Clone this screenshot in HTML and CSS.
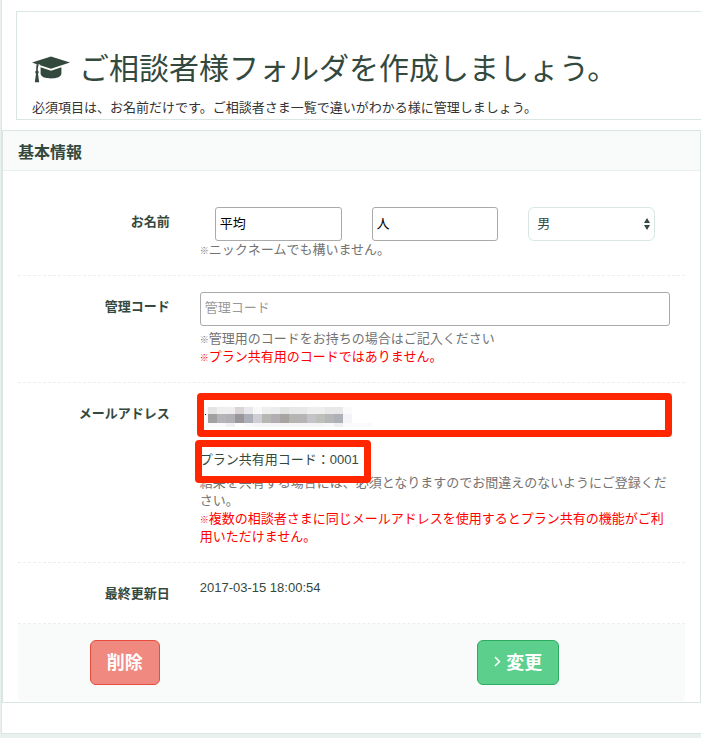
FILE: index.html
```html
<!DOCTYPE html>
<html lang="ja">
    <head>
        <meta charset="UTF-8">
        <meta name="viewport" content="width=device-width, initial-scale=1">
        <title>ご相談者様フォルダ</title>
        <link rel="stylesheet" href="styles.css">
    </head>
    <body>
        <main class="wrapper">
            <header class="page-header">
                <h1>
                    <svg class="icon-cap" viewBox="0 0 38 27" aria-hidden="true">
                        <path d="M19 0.5 L38 6.6 L19 12.8 L7.4 9 L8.6 8.2 L5.4 8.4 L0 6.6 Z"/>
                        <path d="M8.6 11.2 L19 14.8 L29.4 11.2 V18 C28.6 21.2 24.5 22.4 19 22.4 C13.5 22.4 9.4 21.2 8.6 18 Z"/>
                        <path d="M4.8 8 L6.8 8.8 C6 10.4 5.8 12.4 5.8 14.6 C7 15.4 7 17 6 17.8 L7.2 26.2 H2.8 L4 17.8 C3 17 3 15.4 4.2 14.6 C4.2 12 4.2 10 4.8 8 Z"/>
                    </svg>
                    <span>ご相談者様フォルダを作成しましょう。</span>
                </h1>
                <p>必須項目は、お名前だけです。ご相談者さま一覧で違いがわかる様に管理しましょう。</p>
            </header>

            <section class="panel">
                <h2 class="panel-heading">基本情報</h2>
                <form class="panel-body">
                    <div class="form-group">
                        <label class="form-label" for="sei">お名前</label>
                        <div class="form-field">
                            <div class="name-row">
                                <input type="text" id="sei" class="form-control" value="平均">
                                <input type="text" id="mei" class="form-control" value="人" aria-label="名">
                                <div class="select-wrap">
                                    <select id="seibetsu" class="form-control" aria-label="性別">
                                        <option selected>男</option>
                                        <option>女</option>
                                    </select>
                                    <svg class="select-arrow" viewBox="0 0 6 12" aria-hidden="true">
                                        <path d="M3 0 L6 5 H0 Z M0 7 H6 L3 12 Z"/>
                                    </svg>
                                </div>
                            </div>
                            <p class="help"><span class="kome">※</span>ニックネームでも構いません。</p>
                        </div>
                    </div>

                    <div class="form-group">
                        <label class="form-label" for="code">管理コード</label>
                        <div class="form-field">
                            <input type="text" id="code" class="form-control" placeholder="管理コード">
                            <p class="help help-gap"><span class="kome">※</span>管理用のコードをお持ちの場合はご記入ください</p>
                            <p class="help caution"><span class="kome">※</span>プラン共有用のコードではありません。</p>
                        </div>
                    </div>

                    <div class="form-group">
                        <label class="form-label" for="email">メールアドレス</label>
                        <div class="form-field">
                            <div class="mail-box">
                                <input type="email" id="email" class="form-control">
                                <svg class="mosaic" viewBox="0 0 167 20" shape-rendering="crispEdges" aria-hidden="true">
                                    <rect x="0" y="7" width="1" height="1" fill="#111"/>
                                    <rect x="1" y="0" width="2" height="20" fill="#f8f8f8"/>
                                    <!-- 上段 -->
                                    <rect x="3" y="0" width="9" height="7" fill="#e4e4e4"/>
                                    <rect x="12" y="0" width="18" height="7" fill="#eeeeee"/>
                                    <rect x="30" y="0" width="9" height="7" fill="#d9d5d7"/>
                                    <rect x="39" y="0" width="9" height="7" fill="#e8e8ed"/>
                                    <rect x="48" y="0" width="9" height="7" fill="#f8f8f8"/>
                                    <rect x="57" y="0" width="9" height="7" fill="#eeeeee"/>
                                    <rect x="66" y="0" width="9" height="7" fill="#ececec"/>
                                    <rect x="75" y="0" width="9" height="7" fill="#e3e3e1"/>
                                    <rect x="84" y="0" width="18" height="7" fill="#e8e8e8"/>
                                    <rect x="102" y="0" width="18" height="7" fill="#eeeeef"/>
                                    <rect x="120" y="0" width="18" height="7" fill="#e8e8e8"/>
                                    <rect x="138" y="0" width="9" height="7" fill="#fafafa"/>
                                    <!-- 中段 -->
                                    <rect x="3" y="7" width="9" height="9" fill="#a1a1a1"/>
                                    <rect x="12" y="7" width="9" height="9" fill="#b5b4b8"/>
                                    <rect x="21" y="7" width="9" height="9" fill="#b0b0b5"/>
                                    <rect x="30" y="7" width="9" height="9" fill="#99979c"/>
                                    <rect x="39" y="7" width="9" height="9" fill="#adafb8"/>
                                    <rect x="48" y="7" width="9" height="9" fill="#cecfd4"/>
                                    <rect x="57" y="7" width="9" height="9" fill="#b6b6b3"/>
                                    <rect x="66" y="7" width="9" height="9" fill="#b2adb2"/>
                                    <rect x="75" y="7" width="9" height="9" fill="#a5a4a1"/>
                                    <rect x="84" y="7" width="9" height="9" fill="#b5b4b1"/>
                                    <rect x="93" y="7" width="9" height="9" fill="#b6b4b4"/>
                                    <rect x="102" y="7" width="9" height="9" fill="#c3c3c9"/>
                                    <rect x="111" y="7" width="9" height="9" fill="#bdbfbb"/>
                                    <rect x="120" y="7" width="9" height="9" fill="#b5b6b7"/>
                                    <rect x="129" y="7" width="9" height="9" fill="#adb0b7"/>
                                    <rect x="138" y="7" width="9" height="9" fill="#f4f4f7"/>
                                    <!-- 下段 -->
                                    <rect x="3" y="16" width="18" height="4" fill="#fafafa"/>
                                    <rect x="21" y="16" width="9" height="4" fill="#f1f1f2"/>
                                    <rect x="39" y="16" width="9" height="4" fill="#f9f9fa"/>
                                    <rect x="48" y="16" width="72" height="4" fill="#f5f5f5"/>
                                    <rect x="120" y="16" width="9" height="4" fill="#f8f8f8"/>
                                    <rect x="129" y="16" width="9" height="4" fill="#eeeeef"/>
                                    <rect x="138" y="16" width="29" height="4" fill="#fafafb"/>
                                </svg>
                            </div>
                            <p class="plan-code">プラン共有用コード：0001</p>
                            <p class="help help-gap">結果を共有する場合には、必須となりますのでお間違えのないようにご登録ください。</p>
                            <p class="help caution"><span class="kome">※</span>複数の相談者さまに同じメールアドレスを使用するとプラン共有の機能がご利用いただけません。</p>
                        </div>
                    </div>

                    <div class="form-group">
                        <span class="form-label">最終更新日</span>
                        <div class="form-field">2017-03-15 18:00:54</div>
                    </div>

                    <div class="form-actions">
                        <div class="action-left">
                            <button type="button" class="btn btn-danger">削除</button>
                        </div>
                        <div class="action-right">
                            <button type="submit" class="btn btn-success">
                                <svg class="icon-angle" viewBox="0 0 7 11" aria-hidden="true">
                                    <path d="M1 1 L5.5 5.5 L1 10"/>
                                </svg>
                                変更
                            </button>
                        </div>
                    </div>
                </form>
            </section>
        </main>
    </body>
</html>
```
FILE: styles.css
```css
* {
    box-sizing: border-box;
}
body {
    margin: 0;
    padding: 0 0 4px 1px;
    background-color: #e9f0ed;
    color: #34493e;
    font-family: "Liberation Sans", "Noto Sans CJK JP", sans-serif;
    font-size: 13px;
    line-height: 18px;
}
.wrapper {
    padding: 11px 0 30px;
    background-color: #fff;
    border-left: 1px solid #dae6e1;
    border-bottom: 1px solid #dae6e1;
}

/* ページ見出し */
.page-header {
    margin: 0 0 10px 14px;
    padding: 40px 0 2px 15px;
    border: 1px solid #dae6e1;
    border-right: none;
}
.page-header h1 {
    display: flex;
    align-items: center;
    gap: 9px;
    margin: 0 0 13px;
    font-size: 30px;
    line-height: 34px;
    font-weight: normal;
}
.page-header p {
    margin: 0;
    color: #333;
}
.icon-cap {
    width: 38px;
    height: 27px;
    fill: #34493e;
}

/* パネル */
.panel {
    border: 1px solid #dae6e1;
}
.panel-heading {
    margin: 0;
    padding: 12px 15px 7px;
    background-color: #f9fbfa;
    border-bottom: 1px solid #e8efec;
    font-size: 16px;
    line-height: 20px;
}
.panel-body {
    padding: 20px 15px 1px;
}
.form-group {
    display: flex;
    padding: 16px 0;
    border-bottom: 1px dashed #eee;
}
.form-label {
    width: 25%;
    padding: 6px 15px 4px 0;
    font-weight: bold;
    text-align: right;
}
.form-field {
    width: 75%;
    padding: 0 15px;
}
.name-row {
    display: grid;
    grid-template-columns: 1fr 1fr 1fr;
    gap: 30px;
    padding: 0 15px;
}
.form-control {
    display: block;
    width: 100%;
    height: 34px;
    padding: 0 4px 3px;
    background-color: #fff;
    border: 1px solid #aaa;
    border-radius: 3px;
    color: #000;
    font-family: inherit;
    font-size: 13px;
}
.form-control::placeholder {
    color: #999;
}
select.form-control {
    appearance: none;
    padding: 0 8px 2px;
    border-color: #dae6e1;
    border-radius: 6px;
    color: #34493e;
}
.select-wrap {
    position: relative;
}
.select-arrow {
    position: absolute;
    top: 11px;
    right: 5px;
    width: 6px;
    height: 12px;
    fill: #34493e;
    pointer-events: none;
}
.help {
    margin: 0;
    color: #737373;
}
.help-gap {
    margin-top: 4px;
}
.kome {
    font-size: 9px;
    line-height: 1;
    font-weight: bold;
}
.caution {
    color: #f00;
}

/* 赤枠 */
.mail-box,
.plan-code {
    position: relative;
}
.mail-box::after,
.plan-code::after {
    content: "";
    position: absolute;
    border: 7px solid #ff2600;
    border-radius: 4px;
    pointer-events: none;
}
.mail-box::after {
    inset: -6px -2px -4px -3px;
}
.plan-code {
    width: fit-content;
    margin: 18px 0 5px;
}
.plan-code::after {
    inset: -11px -12px -14px -5px;
}
.mosaic {
    position: absolute;
    top: 8px;
    left: 5px;
    width: 167px;
    height: 20px;
}

/* ボタン */
.form-actions {
    display: flex;
    justify-content: space-between;
    padding: 16px 0;
    background-color: #f9fbfa;
    border-radius: 0 0 4px 4px;
    text-align: center;
}
.action-left {
    width: 32%;
}
.action-right {
    width: 50%;
}
.btn {
    display: inline-flex;
    align-items: center;
    gap: 5px;
    height: 45px;
    padding: 0 16px 3px;
    border: 1px solid;
    border-radius: 6px;
    color: #fff;
    font-family: inherit;
    font-size: 18px;
    font-weight: bold;
    vertical-align: top;
    cursor: pointer;
}
.btn-danger {
    background-color: #f08a80;
    border-color: #e74c3c;
}
.btn-success {
    background-color: #5ccf8c;
    border-color: #2bad60;
}
.icon-angle {
    width: 7px;
    height: 11px;
    fill: none;
    stroke: #fff;
    stroke-width: 1.5;
}
```
